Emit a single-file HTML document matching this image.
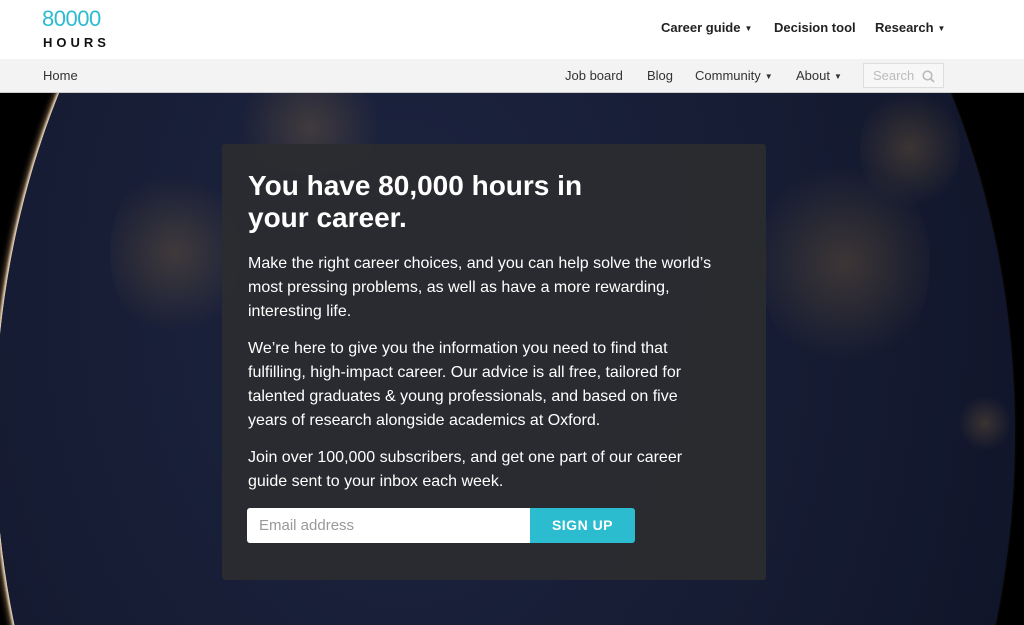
<!DOCTYPE html>
<html><head><meta charset="utf-8"><style>
*{margin:0;padding:0;box-sizing:border-box}
body{width:1024px;height:625px;overflow:hidden;font-family:"Liberation Sans",sans-serif;background:#000;position:relative}
.top{position:absolute;left:0;top:0;width:1024px;height:59px;background:#fff}
.logo1{position:absolute;left:42px;top:6px;font-size:22px;color:#2bbcd0;letter-spacing:-0.5px}
.logo2{position:absolute;left:43px;top:35px;font-size:13px;font-weight:bold;letter-spacing:4px;color:#111}
.nav1{position:absolute;top:20px;font-size:13px;font-weight:bold;color:#222}
.sub{position:absolute;left:0;top:59px;width:1024px;height:34px;background:#f3f3f3;border-bottom:1px solid #ccc}
.nav2{position:absolute;top:68px;font-size:13px;color:#333}
.car{font-size:8px;margin-left:4px;vertical-align:1px}
.search{position:absolute;left:863px;top:63px;width:81px;height:25px;border:1px solid #ddd;background:#f7f7f7;color:#bbb;font-size:13px;padding:4px 9px}
.hero{position:absolute;left:0;top:93px;width:1024px;height:532px;overflow:hidden;background:#000}
.earth{position:absolute;left:-5px;top:-360px;width:1020px;height:1400px;border-radius:50%;
background:radial-gradient(ellipse at 40% 40%,#1d2440 0%,#161c33 45%,#10152a 75%,#0b0f1e 100%);
box-shadow:-2px 0 2px #e8d9c0, -4px 0 6px rgba(255,200,140,.5)}
.glow{position:absolute;border-radius:50%;background:radial-gradient(circle,rgba(200,150,70,.22),rgba(200,150,70,0) 70%)}
.panel{position:absolute;left:222px;top:144px;width:544px;height:436px;background:rgba(43,44,47,.95);border-radius:3px;color:#fff;padding:26px 26px}
h1{font-size:28px;line-height:32px;font-weight:bold;margin-bottom:18px}
p{font-size:16px;line-height:24px;margin-bottom:13px;white-space:nowrap}
.form{position:absolute;left:25px;top:364px;width:388px;height:35px;display:flex}
.inp{width:283px;height:35px;background:#fff;border-radius:3px 0 0 3px;color:#999;font-size:15px;padding:0 12px;line-height:35px}
.btn{width:105px;height:35px;background:#2bbcd0;color:#fff;font-weight:bold;font-size:14px;text-align:center;line-height:35px;border-radius:0 3px 3px 0;letter-spacing:.5px}
</style></head><body>
<div class="top">
<div class="logo1">80000</div><div class="logo2">HOURS</div>
<div class="nav1" style="left:661px">Career guide<span class="car">▼</span></div>
<div class="nav1" style="left:774px">Decision tool</div>
<div class="nav1" style="left:875px">Research<span class="car">▼</span></div>
</div>
<div class="sub"></div>
<div class="nav2" style="left:43px">Home</div>
<div class="nav2" style="left:565px">Job board</div>
<div class="nav2" style="left:647px">Blog</div>
<div class="nav2" style="left:695px">Community<span class="car">▼</span></div>
<div class="nav2" style="left:796px">About<span class="car">▼</span></div>
<div class="search">Search <svg width="13" height="13" viewBox="0 0 13 13" style="position:absolute;right:8px;top:6px"><circle cx="5.5" cy="5.5" r="4.3" fill="none" stroke="#bbb" stroke-width="1.6"/><path d="M8.6 8.6L12 12" stroke="#bbb" stroke-width="1.8"/></svg></div>
<div class="hero">
<div class="earth"></div>
<div class="glow" style="left:110px;top:70px;width:130px;height:180px"></div>
<div class="glow" style="left:220px;top:-10px;width:180px;height:90px"></div>
<div class="glow" style="left:760px;top:60px;width:170px;height:220px"></div>
<div class="glow" style="left:860px;top:-10px;width:100px;height:130px"></div>
<div class="glow" style="left:960px;top:300px;width:50px;height:60px"></div>
</div>
<div class="panel">
<h1>You have 80,000 hours in<br>your career.</h1>
<p>Make the right career choices, and you can help solve the world’s<br>most pressing problems, as well as have a more rewarding,<br>interesting life.</p>
<p>We’re here to give you the information you need to find that<br>fulfilling, high-impact career. Our advice is all free, tailored for<br>talented graduates &amp; young professionals, and based on five<br>years of research alongside academics at Oxford.</p>
<p>Join over 100,000 subscribers, and get one part of our career<br>guide sent to your inbox each week.</p>
<div class="form"><div class="inp">Email address</div><div class="btn">SIGN UP</div></div>
</div>
</body></html>
